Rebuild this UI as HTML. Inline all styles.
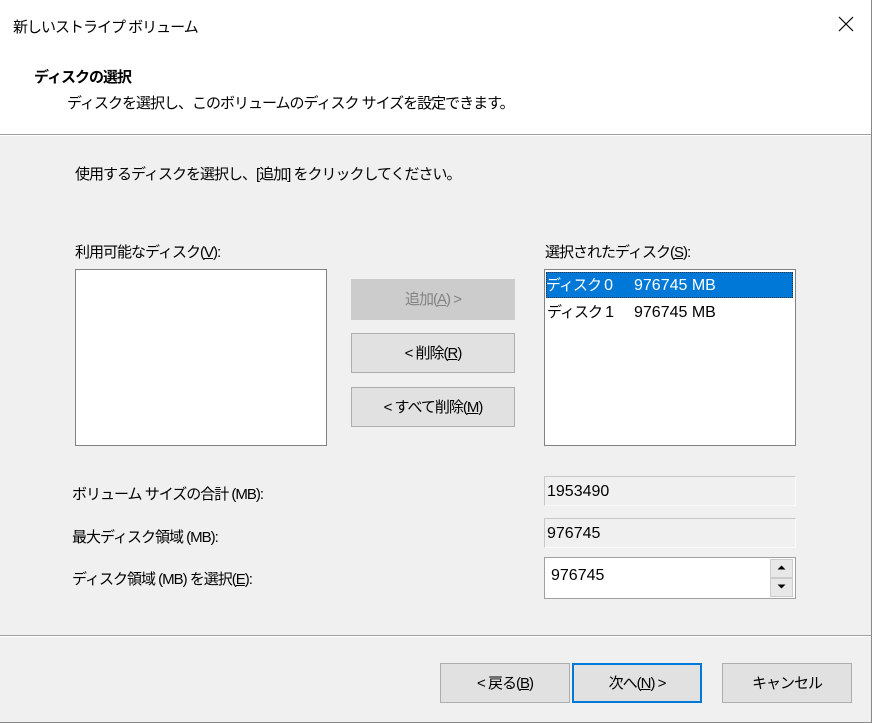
<!DOCTYPE html>
<html><head><meta charset="utf-8"><style>
body{margin:0;width:872px;height:723px;overflow:hidden;background:#f0f0f0;font-family:"Liberation Sans","Noto Sans CJK JP",sans-serif;font-size:15px;color:#000;position:relative;letter-spacing:-1px}
.a{position:absolute;white-space:nowrap}
.n{letter-spacing:0;font-size:16px}
.box{position:absolute;background:#fff;border:1px solid #828282;box-sizing:border-box}
.btn{position:absolute;background:#e1e1e1;border:1px solid #adadad;box-sizing:border-box;text-align:center;line-height:39px}
.ro{position:absolute;background:#f0f0f0;border:1px solid #c8c8c8;border-bottom-color:#fafafa;border-right-color:#fafafa;box-sizing:border-box;padding-left:2px;line-height:29px;letter-spacing:0;font-size:16px}
u{text-decoration:underline}
</style></head><body>
<div class="a" style="left:0;top:0;width:872px;height:134px;background:#fff"></div>
<div class="a" style="left:0;top:134px;width:872px;height:1px;background:#a0a0a0"></div>
<div class="a" style="left:0;top:135px;width:872px;height:1px;background:#fff"></div>
<div class="a" style="left:871px;top:0;width:1px;height:723px;background:#888"></div>
<div class="a" style="left:0;top:722px;width:872px;height:1px;background:#888"></div>
<div class="a" style="left:13px;top:16px">新しいストライプ ボリューム</div>
<svg class="a" style="left:838px;top:16px" width="16" height="16"><path d="M1 1L15 15M15 1L1 15" stroke="#000" stroke-width="1.2"/></svg>
<div class="a" style="left:34px;top:66px;font-weight:bold">ディスクの選択</div>
<div class="a" style="left:67px;top:92px">ディスクを選択し、このボリュームのディスク サイズを設定できます。</div>
<div class="a" style="left:75px;top:163px">使用するディスクを選択し、[追加] をクリックしてください。</div>
<div class="a" style="left:75px;top:241px">利用可能なディスク(<u>V</u>):</div>
<div class="a" style="left:545px;top:241px">選択されたディスク(<u>S</u>):</div>
<div class="box" style="left:75px;top:269px;width:252px;height:177px"></div>
<div class="box" style="left:544px;top:269px;width:252px;height:177px"></div>
<div class="a" style="left:546px;top:272px;width:247px;height:26px;background:#0078d7;color:#fff;line-height:27px;outline:1px dotted #333;outline-offset:-1px">ディスク <span class="n">0</span><span class="n" style="position:absolute;left:88px">976745 MB</span></div>
<div class="a" style="left:547px;top:299px;width:240px;line-height:27px">ディスク <span class="n">1</span><span class="n" style="position:absolute;left:87px">976745 MB</span></div>
<div class="btn" style="left:351px;top:279px;width:164px;height:41px;background:#cccccc;border-color:#cccccc;color:#838383">追加(<u>A</u>) &gt;</div>
<div class="btn" style="left:351px;top:333px;width:164px;height:40px">&lt; 削除(<u>R</u>)</div>
<div class="btn" style="left:351px;top:387px;width:164px;height:40px">&lt; すべて削除(<u>M</u>)</div>
<div class="a" style="left:72px;top:483px">ボリューム サイズの合計 (MB):</div>
<div class="a" style="left:72px;top:526px">最大ディスク領域 (MB):</div>
<div class="a" style="left:72px;top:568px">ディスク領域 (MB) を選択(<u>E</u>):</div>
<div class="ro" style="left:544px;top:476px;width:252px;height:30px">1953490</div>
<div class="ro" style="left:544px;top:518px;width:252px;height:30px">976745</div>
<div class="box" style="left:544px;top:557px;width:252px;height:42px;padding-left:6px;line-height:36px;border-color:#a0a0a0;letter-spacing:0;font-size:16px">976745</div>
<div class="a" style="left:770px;top:559px;width:23px;height:19px;background:#e8e8e8;border:1px solid #ccc;box-sizing:border-box"></div>
<div class="a" style="left:770px;top:578px;width:23px;height:19px;background:#e8e8e8;border:1px solid #ccc;box-sizing:border-box"></div>
<svg class="a" style="left:777px;top:565px" width="9" height="6"><path d="M0.5 4.5L4.5 0.5L8.5 4.5Z" fill="#000"/></svg>
<svg class="a" style="left:777px;top:584px" width="9" height="6"><path d="M0.5 0.5L4.5 4.5L8.5 0.5Z" fill="#000"/></svg>
<div class="a" style="left:0;top:635px;width:871px;height:1px;background:#a0a0a0"></div>
<div class="a" style="left:0;top:636px;width:871px;height:1px;background:#fff"></div>
<div class="btn" style="left:440px;top:663px;width:130px;height:40px">&lt; 戻る(<u>B</u>)</div>
<div class="btn" style="left:572px;top:663px;width:130px;height:40px;border:2px solid #0078d7;line-height:37px">次へ(<u>N</u>) &gt;</div>
<div class="btn" style="left:722px;top:663px;width:130px;height:40px">キャンセル</div>
</body></html>
